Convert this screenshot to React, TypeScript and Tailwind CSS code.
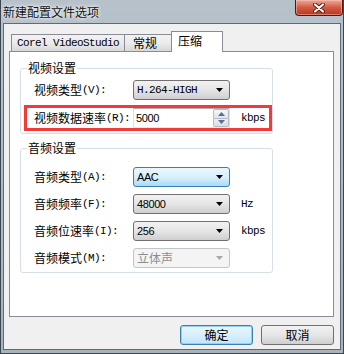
const cjk = "font-['Noto_Sans_CJK_SC',sans-serif]"
const mono = "font-['Liberation_Mono',monospace] text-[11px] tracking-[-0.6px]"
const sans = "font-['Liberation_Sans',sans-serif] text-[11px] tracking-[-0.4px]"

function Arrow({ color = "#000" }: { color?: string }) {
  return (
    <svg width="7" height="4" viewBox="0 0 7 4" className="shrink-0">
      <path d="M0 0h7L3.5 4z" fill={color} />
    </svg>
  )
}

function Label({ text, hotkey }: { text: string; hotkey: string }) {
  return (
    <div className="w-[99px] shrink-0 flex items-center leading-[12px] text-[12px] text-black">
      <span className={cjk}>{text}</span>
      <span className={mono}>({hotkey}):</span>
    </div>
  )
}

type ComboProps = {
  value: string
  variant?: "normal" | "focus" | "disabled"
  font?: string
}

function Combo({ value, variant = "normal", font = sans }: ComboProps) {
  const box =
    variant === "focus"
      ? "border-[#3c7fb1] bg-linear-to-b from-[#eaf6fd] via-[#d9f0fc] to-[#a7d9f5]"
      : variant === "disabled"
        ? "border-[#c2c5c9] bg-[#f4f4f4]"
        : "border-[#707070] bg-linear-to-b from-[#f2f2f2] via-[#e5e5e5] to-[#cfcfcf]"
  return (
    <div className={`w-[97px] h-[20px] shrink-0 border rounded-[3px] flex items-center justify-between pl-[3px] pr-[6px] ${box}`}>
      <span className={`${font} leading-[12px] ${variant === "disabled" ? "text-[#8d8d8d]" : "text-black"}`}>{value}</span>
      <Arrow color={variant === "disabled" ? "#a8a8a8" : "#000"} />
    </div>
  )
}

function Spinner({ value }: { value: string }) {
  return (
    <div className="w-[97px] h-[20px] shrink-0 border border-[#abadb3] border-b-[#e3e9ef] border-x-[#dbdfe6] bg-white flex items-stretch">
      <span className={`${sans} leading-[18px] pl-[2px] flex-1 text-black`}>{value}</span>
      <div className="w-[16px] flex flex-col">
        <div className="flex-1 border border-[#b6bcc6] rounded-t-[2px] bg-linear-to-b from-[#f6f6f6] to-[#e4e4e4] flex items-center justify-center">
          <svg width="7" height="4" viewBox="0 0 7 4">
            <path d="M3.5 0L7 4H0z" fill="#4d6ea8" />
          </svg>
        </div>
        <div className="flex-1 border border-t-0 border-[#b6bcc6] rounded-b-[2px] bg-linear-to-b from-[#eeeeee] to-[#dcdcdc] flex items-center justify-center">
          <svg width="7" height="4" viewBox="0 0 7 4">
            <path d="M0 0h7L3.5 4z" fill="#4d6ea8" />
          </svg>
        </div>
      </div>
    </div>
  )
}

function Unit({ children }: { children: string }) {
  return <span className={`${mono} ml-[11px] leading-[12px] text-black`}>{children}</span>
}

function Button({ children, primary }: { children: string; primary?: boolean }) {
  return (
    <button
      className={`w-[73px] h-[20px] rounded-[3px] border flex items-center justify-center text-[12px] leading-[12px] text-black ${cjk} ${
        primary
          ? "border-[#3c7fb1] bg-linear-to-b from-[#eaf6fd] via-[#d9f0fc] to-[#bee6fd] shadow-[inset_0_0_0_1px_#8ed1f5]"
          : "border-[#707070] bg-linear-to-b from-[#f2f2f2] via-[#e6e6e6] to-[#cfcfcf]"
      }`}
    >
      {children}
    </button>
  )
}

export default function App() {
  return (
    <div className="w-[344px] h-[354px] flex flex-col border-x border-b border-[#3b4651] bg-linear-to-b from-[#b7c1ca] to-[#a8b3bd] overflow-hidden">
      {/* Title bar */}
      <div className="h-[23px] shrink-0 flex items-start justify-between">
        <span className={`${cjk} text-[12px] leading-[14px] pl-[2px] pt-[5px] text-[#111] [text-shadow:0_0_6px_#ffffff,0_0_3px_#ffffff]`}>
          新建配置文件选项
        </span>
        <div className="w-[48px] h-[16px] rounded-b-[4px] border border-t-0 border-[#4a1a12] bg-linear-to-b from-[#e9a999] via-[#d35a42] to-[#b83620] flex items-center justify-center shadow-[inset_0_0_0_1px_rgba(255,200,190,0.5)]">
          <svg width="12" height="10" viewBox="0 0 12 10">
            <path d="M2 1.5L10 8.5M10 1.5L2 8.5" stroke="#5a1a10" strokeWidth="4" strokeLinecap="round" />
            <path d="M2 1.5L10 8.5M10 1.5L2 8.5" stroke="#ffffff" strokeWidth="2.2" strokeLinecap="round" />
          </svg>
        </div>
      </div>

      {/* Client area */}
      <div className="flex-1 mx-[2px] mb-[3px] border border-[#5d6b78] bg-[#f0f0f0]">
        <div className="ml-[5px] mt-[7px] w-[325px]">
          {/* Tabs */}
          <div className="flex items-end h-[21px] -mb-px pl-[2px] relative z-10">
            <div className="w-[114px] h-[17px] mb-px border border-b-0 border-[#898c95] bg-linear-to-b from-[#f2f2f2] via-[#ebebeb] to-[#d8d8d8] flex items-center justify-center">
              <span className={`${mono} leading-[12px] text-black`}>Corel VideoStudio</span>
            </div>
            <div className="w-[47px] h-[17px] mb-px border border-l-0 border-b-0 border-[#898c95] bg-linear-to-b from-[#f2f2f2] via-[#ebebeb] to-[#d8d8d8] flex items-center justify-center">
              <span className={`${cjk} text-[12px] leading-[12px] text-black -ml-[6px]`}>常规</span>
            </div>
            <div className="w-[52px] h-[21px] -ml-px border border-b-0 border-[#898c95] bg-white flex items-start pt-[3px] pl-[6px]">
              <span className={`${cjk} text-[12px] leading-[12px] text-black`}>压缩</span>
            </div>
          </div>

          {/* Tab panel */}
          <div className="h-[266px] border border-[#898c95] bg-white pt-[10px]">
            <fieldset className="ml-[10px] w-[253px] border border-[#d5dfe5] rounded-[3px] pb-[2px]">
              <legend className={`${cjk} text-[12px] leading-[12px] ml-[6px] px-px text-black`}>视频设置</legend>
              <div className="mt-[6px] ml-[13px] h-[20px] flex items-center">
                <Label text="视频类型" hotkey="V" />
                <Combo value="H.264-HIGH" font={mono} />
              </div>
              <div className="mt-[5px] ml-[3px] w-[248px] border-[3px] border-[#f23a3a] pl-[7px] flex items-center">
                <Label text="视频数据速率" hotkey="R" />
                <Spinner value="5000" />
                <Unit>kbps</Unit>
              </div>
            </fieldset>

            <fieldset className="mt-[8px] ml-[10px] w-[253px] border border-[#d5dfe5] rounded-[3px] pb-[4px]">
              <legend className={`${cjk} text-[12px] leading-[12px] ml-[6px] px-px text-black`}>音频设置</legend>
              <div className="mt-[13px] ml-[13px] flex flex-col gap-[7px]">
                <div className="h-[20px] flex items-center">
                  <Label text="音频类型" hotkey="A" />
                  <Combo value="AAC" variant="focus" />
                </div>
                <div className="h-[20px] flex items-center">
                  <Label text="音频频率" hotkey="F" />
                  <Combo value="48000" />
                  <Unit>Hz</Unit>
                </div>
                <div className="h-[20px] flex items-center">
                  <Label text="音频位速率" hotkey="I" />
                  <Combo value="256" />
                  <Unit>kbps</Unit>
                </div>
                <div className="h-[20px] flex items-center">
                  <Label text="音频模式" hotkey="M" />
                  <Combo value="立体声" variant="disabled" font={`${cjk} text-[12px]`} />
                </div>
              </div>
            </fieldset>
          </div>

          {/* Buttons */}
          <div className="mt-[8px] flex justify-end gap-[8px]">
            <Button primary>确定</Button>
            <Button>取消</Button>
          </div>
        </div>
      </div>
    </div>
  )
}
